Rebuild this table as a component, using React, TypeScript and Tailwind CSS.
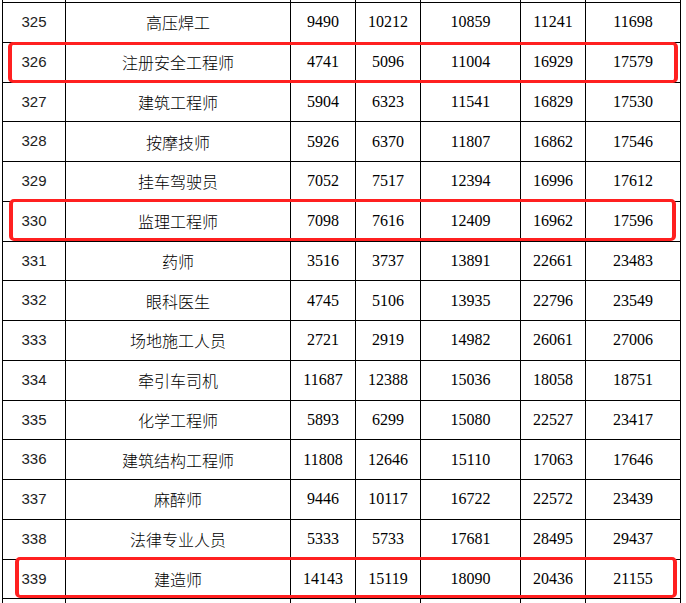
import React from "react";

type Row = [string, string, string, string, string, string, string];

const rows: Row[] = [
  ["325", "高压焊工", "9490", "10212", "10859", "11241", "11698"],
  ["326", "注册安全工程师", "4741", "5096", "11004", "16929", "17579"],
  ["327", "建筑工程师", "5904", "6323", "11541", "16829", "17530"],
  ["328", "按摩技师", "5926", "6370", "11807", "16862", "17546"],
  ["329", "挂车驾驶员", "7052", "7517", "12394", "16996", "17612"],
  ["330", "监理工程师", "7098", "7616", "12409", "16962", "17596"],
  ["331", "药师", "3516", "3737", "13891", "22661", "23483"],
  ["332", "眼科医生", "4745", "5106", "13935", "22796", "23549"],
  ["333", "场地施工人员", "2721", "2919", "14982", "26061", "27006"],
  ["334", "牵引车司机", "11687", "12388", "15036", "18058", "18751"],
  ["335", "化学工程师", "5893", "6299", "15080", "22527", "23417"],
  ["336", "建筑结构工程师", "11808", "12646", "15110", "17063", "17646"],
  ["337", "麻醉师", "9446", "10117", "16722", "22572", "23439"],
  ["338", "法律专业人员", "5333", "5733", "17681", "28495", "29437"],
  ["339", "建造师", "14143", "15119", "18090", "20436", "21155"],
];

const grid = "grid grid-cols-[63px_225px_65px_65px_100px_65px_96px]";
const cell = "flex items-center justify-center border-l border-black";

function Stub({ h }: { h: string }) {
  return (
    <div className={`${grid} ${h}`}>
      {[0, 1, 2, 3, 4, 5, 6].map((i) => (
        <div key={i} className={`${cell} ${i === 6 ? "border-r" : ""}`} />
      ))}
    </div>
  );
}

export default function App() {
  return (
    <div className="relative w-[686px] h-[603px] overflow-hidden bg-white text-black">
      <div className="ml-[2px] w-[679px]">
        <Stub h="h-[2px]" />
        {rows.map((r) => (
          <div key={r[0]} className={`${grid} h-[39.75px] border-t border-black`}>
            <div className={`${cell} text-[15px] font-['Liberation_Sans',sans-serif] text-[#222]`}>{r[0]}</div>
            <div className={`${cell} text-[16px] leading-none font-light font-['Noto_Sans_CJK_SC',sans-serif]`}>
              {r[1]}
            </div>
            {r.slice(2).map((v, i) => (
              <div
                key={i}
                className={`${cell} ${i === 4 ? "border-r" : ""} text-[16px] font-['Liberation_Serif',serif]`}
              >
                {v}
              </div>
            ))}
          </div>
        ))}
        <div className="border-t border-black">
          <Stub h="h-[6px]" />
        </div>
      </div>

      <div className="absolute left-[8px] top-[42px] w-[670px] h-[41px] border-x-4 border-y-[3px] border-[#ff2020] rounded-[5px]" />
      <div className="absolute left-[9px] top-[199px] w-[667px] h-[42px] border-x-4 border-y-[3px] border-[#ff2020] rounded-[5px]" />
      <div className="absolute left-[15px] top-[557px] w-[662px] h-[41px] border-x-4 border-y-[3px] border-[#ff2020] rounded-[5px]" />
    </div>
  );
}
